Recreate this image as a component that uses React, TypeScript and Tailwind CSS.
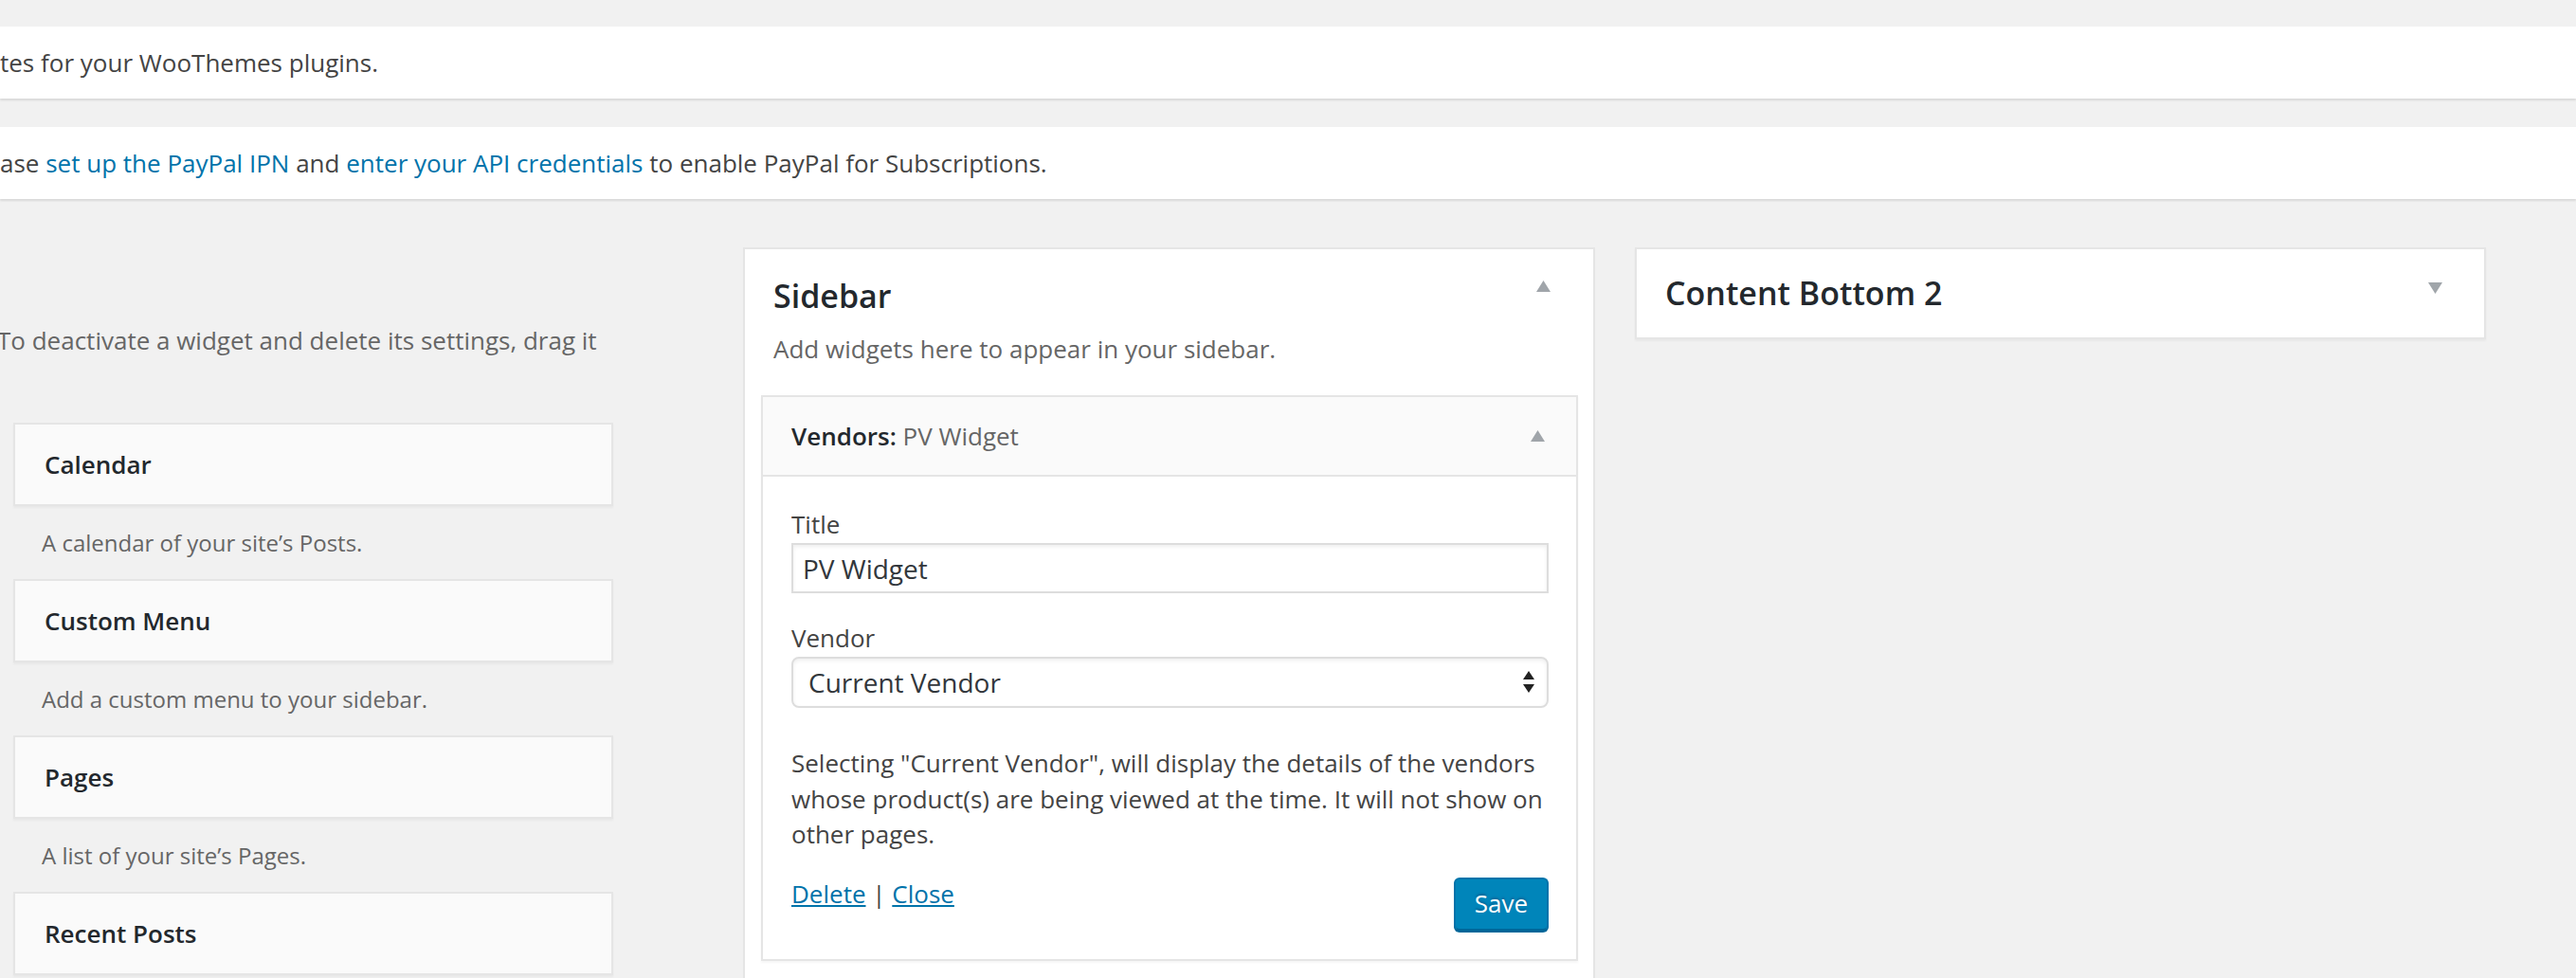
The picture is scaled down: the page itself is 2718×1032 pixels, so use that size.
import React from "react";

function Arrow({ down = false, className = "" }: { down?: boolean; className?: string }) {
  return (
    <svg width="15" height="12" viewBox="0 0 15 12" className={className}>
      {down ? <polygon points="0,0 15,0 7.5,12" fill="#a0a5aa" /> : <polygon points="7.5,0 15,12 0,12" fill="#a0a5aa" />}
    </svg>
  );
}

const widgets = [
  { title: "Calendar", desc: "A calendar of your site’s Posts." },
  { title: "Custom Menu", desc: "Add a custom menu to your sidebar." },
  { title: "Pages", desc: "A list of your site’s Pages." },
  { title: "Recent Posts", desc: "Your site’s most recent Posts." },
];

export default function App() {
  return (
    <div className="w-[2718px] h-[1032px] overflow-hidden bg-[#f1f1f1] font-['Open_Sans',sans-serif] text-[#444]">
      <div className="pt-[28px]">
        <div className="h-[76px] bg-white shadow-[0_2px_2px_rgba(0,0,0,0.1)] flex items-center text-[26px]">
          <p className="whitespace-nowrap">tes for your WooThemes plugins.</p>
        </div>
        <div className="mt-[30px] h-[76px] bg-white shadow-[0_2px_2px_rgba(0,0,0,0.1)] flex items-center text-[26px]">
          <p className="whitespace-nowrap">
            ase <a className="text-[#0073aa]">set up the PayPal IPN</a> and{" "}
            <a className="text-[#0073aa]">enter your API credentials</a> to enable PayPal for Subscriptions.
          </p>
        </div>
      </div>

      <div className="flex items-start">
        {/* Left column: available widgets */}
        <div className="w-[647px] shrink-0 pt-[130px]">
          <p className="-ml-[3px] text-[26px] leading-[39px] text-[#666] whitespace-nowrap">
            To deactivate a widget and delete its settings, drag it
          </p>
          <div className="mt-[67px]">
            {widgets.map((w) => (
              <div key={w.title}>
                <div className="ml-[14px] h-[88px] border-2 border-[#e5e5e5] bg-[#fafafa] shadow-[0_2px_2px_rgba(0,0,0,0.04)] flex items-center pl-[31px]">
                  <h3 className="text-[26px] font-semibold text-[#23282d]">{w.title}</h3>
                </div>
                <div className="h-[77px] flex items-center pl-[44px] text-[24px] text-[#666]">{w.desc}</div>
              </div>
            ))}
          </div>
        </div>

        {/* Middle column: Sidebar */}
        <div className="ml-[137px] mt-[51px] w-[899px] shrink-0 border-2 border-[#e5e5e5] bg-white pb-[40px]">
          <div className="flex items-start justify-between pl-[30px] pr-[45px] pt-[27px]">
            <h2 className="text-[34px] leading-[44px] font-semibold text-[#23282d]">Sidebar</h2>
            <Arrow className="mt-[6px]" />
          </div>
          <p className="pl-[30px] mt-[15px] text-[26px] leading-[39px] text-[#666]">
            Add widgets here to appear in your sidebar.
          </p>
          <div className="mt-[29px] ml-[17px] mr-[16px] border-2 border-[#e5e5e5] shadow-[0_2px_2px_rgba(0,0,0,0.04)]">
            <div className="h-[84px] bg-[#fafafa] border-b-2 border-[#e5e5e5] flex items-center justify-between pl-[30px] pr-[33px]">
              <h3 className="text-[26px] font-semibold text-[#23282d]">
                Vendors:<span className="font-normal text-[#666]"> PV Widget</span>
              </h3>
              <Arrow />
            </div>
            <div className="bg-white pl-[30px] pr-[29px] pt-[31px] pb-[30px] text-[26px]">
              <label className="block leading-[39px]">Title</label>
              <div className="h-[53px] border-2 border-[#ddd] shadow-[inset_0_2px_4px_rgba(0,0,0,0.07)] flex items-center px-[10px] text-[28px] text-[#32373c]">
                PV Widget
              </div>
              <label className="block mt-[28px] leading-[39px]">Vendor</label>
              <div className="h-[54px] border-2 border-[#ddd] rounded-[8px] shadow-[inset_0_2px_4px_rgba(0,0,0,0.07)] flex items-center justify-between pl-[16px] pr-[12px] text-[28px] text-[#32373c]">
                <span>Current Vendor</span>
                <svg width="14" height="24" viewBox="0 0 14 24">
                  <polygon points="7,0 13,9 1,9" fill="#222" />
                  <polygon points="1,14 13,14 7,23" fill="#222" />
                </svg>
              </div>
              <p className="mt-[40px] leading-[37.5px]">
                Selecting "Current Vendor", will display the details of the vendors whose product(s) are being viewed at the time. It will not show on other pages.
              </p>
              <div className="mt-[24px] flex items-start justify-between">
                <div className="leading-[38px]">
                  <a className="text-[#0073aa] underline">Delete</a> | <a className="text-[#0073aa] underline">Close</a>
                </div>
                <button className="mt-[2px] h-[56px] px-[20px] rounded-[6px] bg-[#0085ba] border-2 border-[#0073aa] border-b-[#006799] shadow-[0_2px_0_#006799] text-white text-[26px] [text-shadow:0_-2px_2px_#006799]">
                  Save
                </button>
              </div>
            </div>
          </div>
        </div>

        {/* Right column */}
        <div className="ml-[42px] mt-[51px] w-[898px] shrink-0 h-[97px] border-2 border-[#e5e5e5] bg-white shadow-[0_2px_2px_rgba(0,0,0,0.04)] flex items-center justify-between pl-[30px] pr-[44px]">
          <h2 className="text-[34px] font-semibold text-[#23282d]">Content Bottom 2</h2>
          <Arrow down className="mb-[12px]" />
        </div>
      </div>
    </div>
  );
}
